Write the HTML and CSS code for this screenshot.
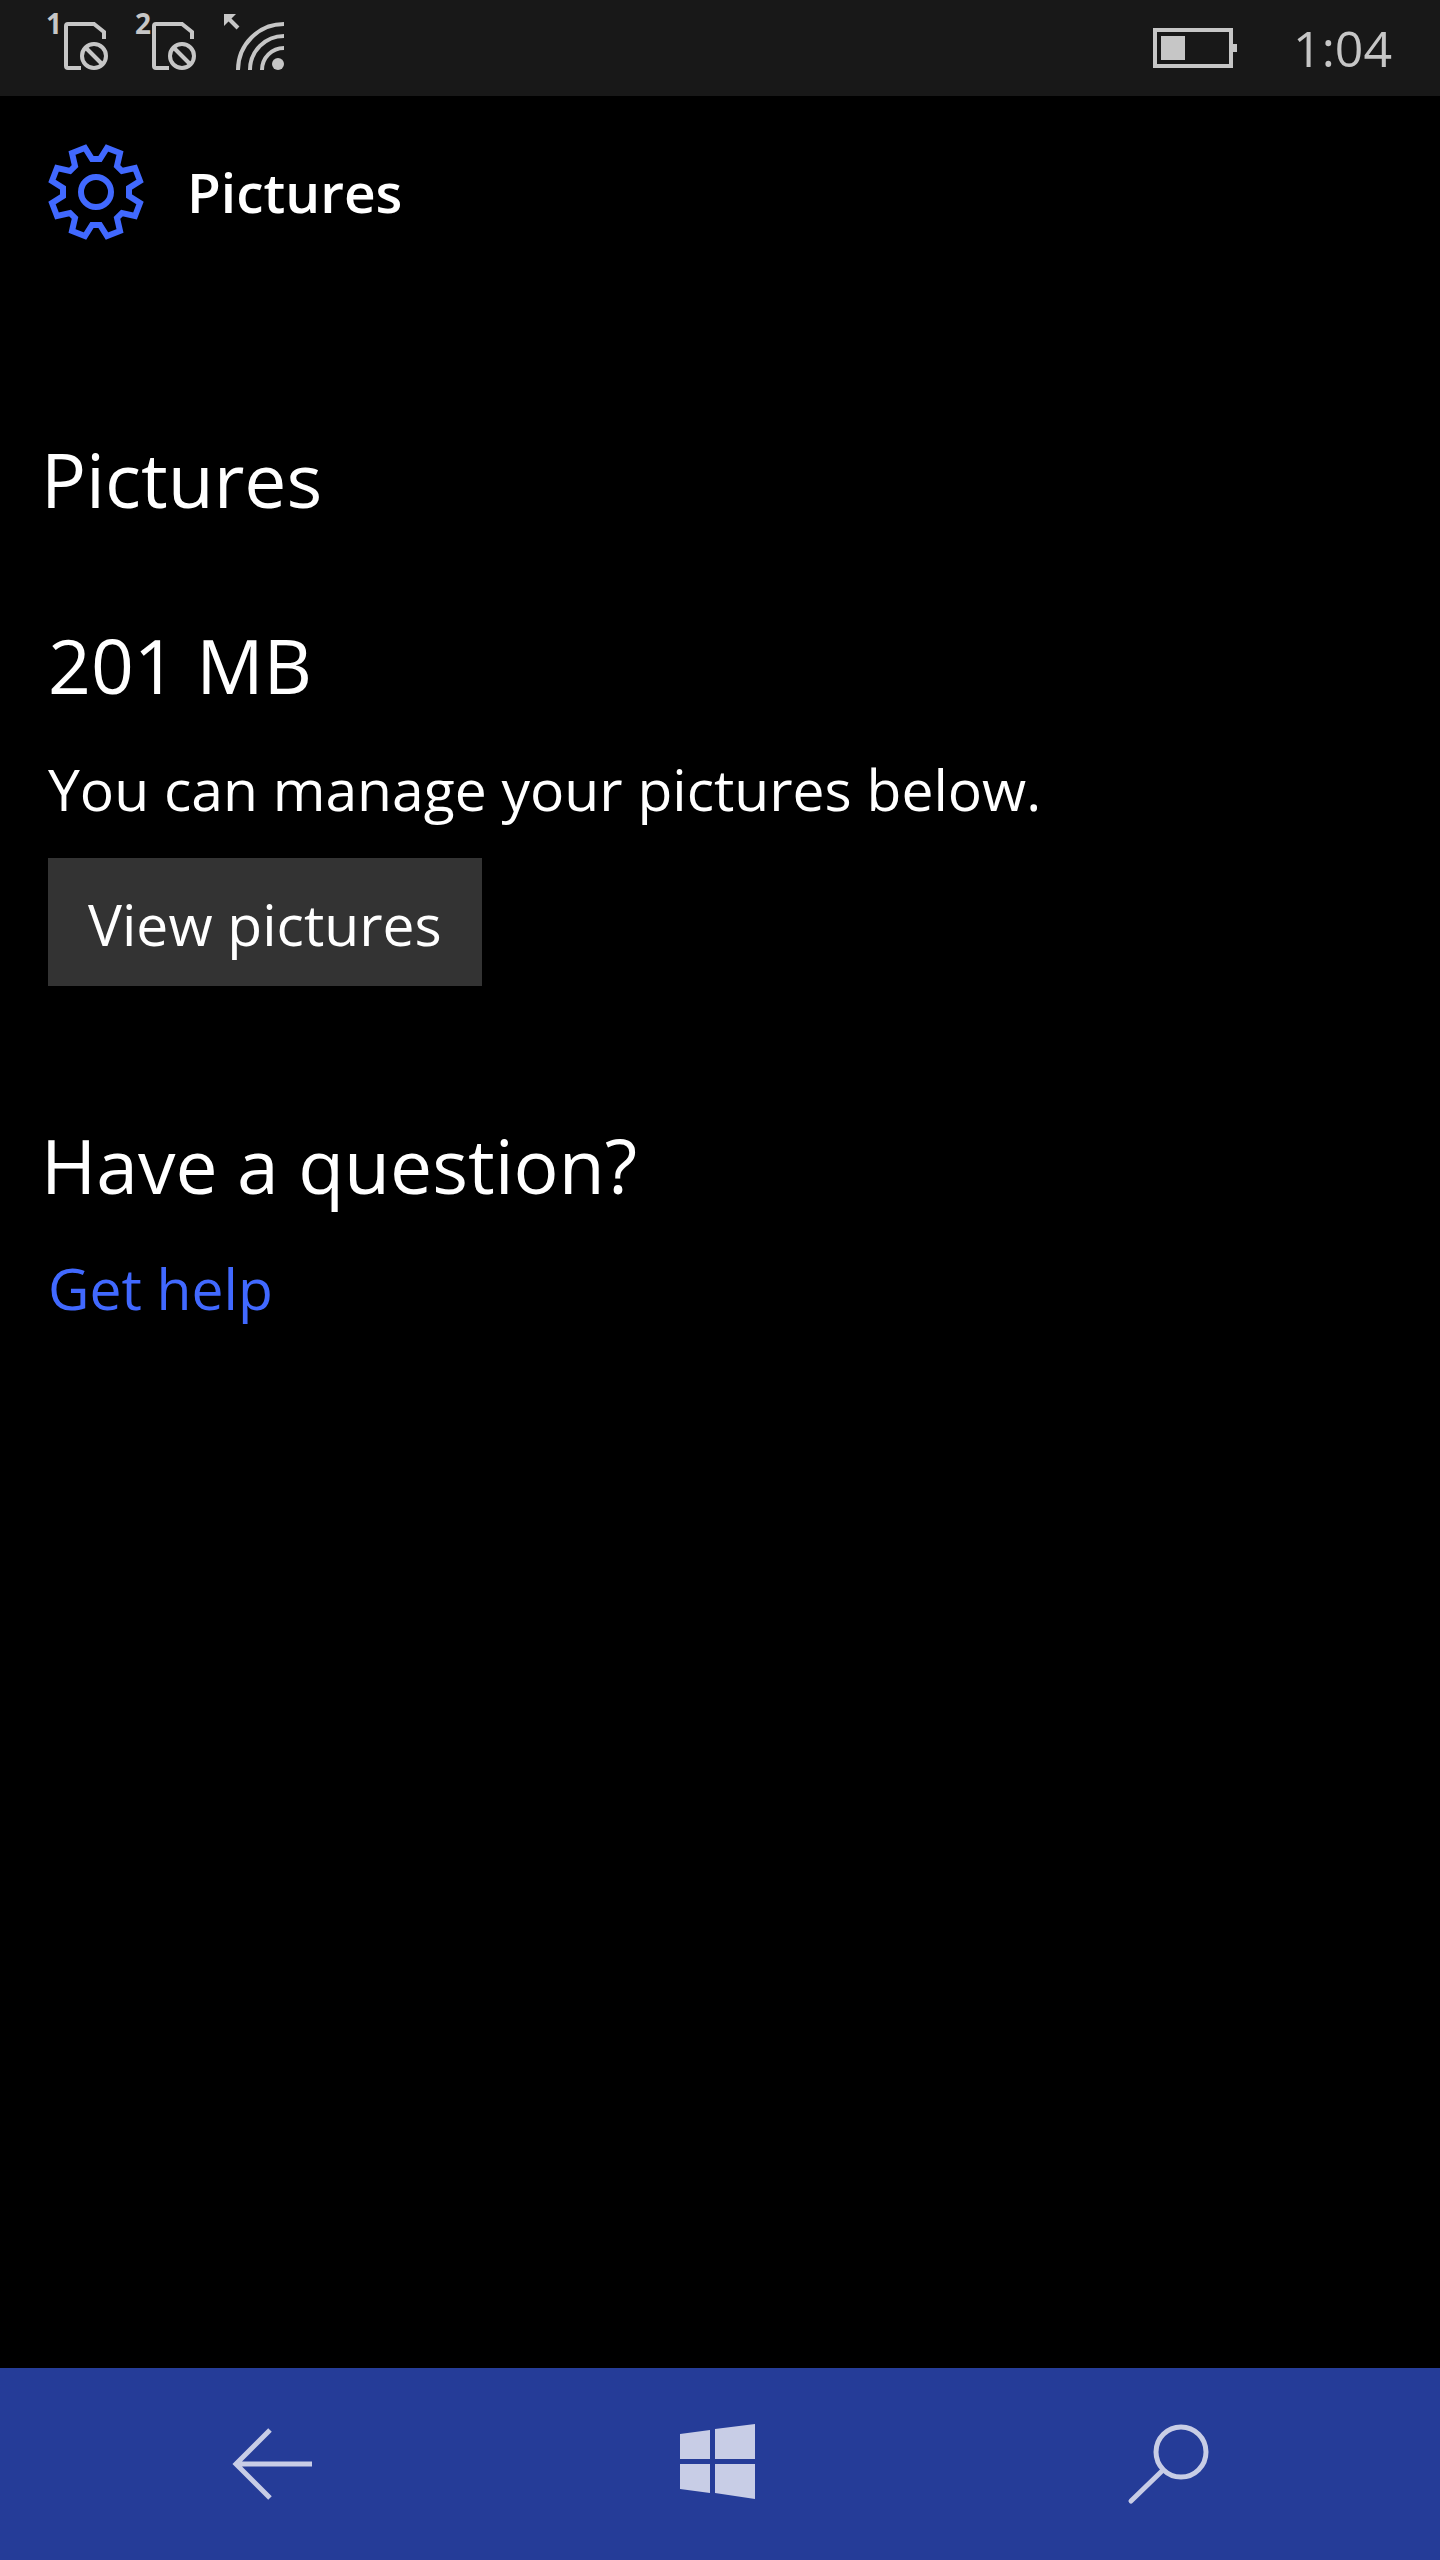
FILE: index.html
```html
<!DOCTYPE html>
<html lang="en">
<head>
  <meta charset="utf-8">
  <meta name="viewport" content="width=device-width, initial-scale=1">
  <title>Pictures</title>
  <link rel="stylesheet" href="styles.css">
</head>
<body>
  <div class="phone">
    <div class="status-bar">
      <div class="status-icons">
        <svg class="status-icon" viewBox="0 0 64 64" role="img" aria-label="SIM 1 unavailable">
          <text class="sim-number" x="-2" y="22">1</text>
          <path class="line" d="M56 27V20L46 12H20Q18 12 18 14V54Q18 56 20 56H33"/>
          <circle class="line" cx="46" cy="44" r="12"/>
          <path class="line" d="M38 36L54 52"/>
        </svg>
        <svg class="status-icon" viewBox="0 0 64 64" role="img" aria-label="SIM 2 unavailable">
          <text class="sim-number" x="-1" y="22">2</text>
          <path class="line" d="M56 27V20L46 12H20Q18 12 18 14V54Q18 56 20 56H33"/>
          <circle class="line" cx="46" cy="44" r="12"/>
          <path class="line" d="M38 36L54 52"/>
        </svg>
        <svg class="status-icon" viewBox="0 0 64 64" role="img" aria-label="Wi-Fi">
          <path class="solid" d="M0 2H12L8 6L4 10L0 14Z"/>
          <path class="line" d="M4 6L14 16"/>
          <path class="line" d="M14 58A46 46 0 0 1 60 12M26 58A34 34 0 0 1 60 24M38 58A22 22 0 0 1 60 36"/>
          <circle class="solid" cx="54" cy="52" r="6"/>
        </svg>
      </div>
      <div class="status-info">
        <svg class="battery" viewBox="0 0 84 40" role="img" aria-label="Battery">
          <rect class="line" x="2" y="2" width="76" height="36"/>
          <path class="solid" d="M8 8h24v24H8zM80 16h4v8h-4z"/>
        </svg>
        <time class="clock">1:04</time>
      </div>
    </div>

    <header class="app-header">
      <svg class="gear" viewBox="-48 -48 96 96" aria-hidden="true">
        <path d="M-4-33H4L11-44L24-39L21-26L26-21L39-24L44-11L33-4V4L44 11L39 24L26 21L21 26L24 39L11 44L4 33H-4L-11 44L-24 39L-21 26L-26 21L-39 24L-44 11L-33 4V-4L-44-11L-39-24L-26-21L-21-26L-24-39L-11-44Z"/>
        <circle r="15"/>
      </svg>
      <h1 class="app-title">Pictures</h1>
    </header>

    <main class="content">
      <section class="section">
        <h2 class="heading">Pictures</h2>
        <p class="size">201 MB</p>
        <p class="text">You can manage your pictures below.</p>
        <button class="button" type="button">View pictures</button>
      </section>
      <section class="section">
        <h2 class="heading">Have a question?</h2>
        <a class="link" href="#help">Get help</a>
      </section>
    </main>

    <nav class="nav-bar" aria-label="System">
      <button class="nav-button" type="button" aria-label="Back">
        <svg viewBox="0 0 80 80"><path class="nav-line" d="M38 6L4 40L38 74M4 40H80"/></svg>
      </button>
      <button class="nav-button" type="button" aria-label="Start">
        <svg viewBox="0 0 80 80"><path class="nav-solid" d="M0 10L30 6V35H0ZM35 5L75 0V35H35ZM0 40H30V69L0 65ZM35 40H75V75L35 69Z"/></svg>
      </button>
      <button class="nav-button" type="button" aria-label="Search">
        <svg viewBox="0 0 80 80"><circle class="nav-line" cx="53" cy="28" r="25"/><path class="nav-line nav-handle" d="M35 46L3 77"/></svg>
      </button>
    </nav>
  </div>
</body>
</html>
```

FILE: styles.css
```css
* {
  box-sizing: border-box;
}

body {
  margin: 0;
  background: #000;
  color: #fff;
  font-family: "Open Sans", "Noto Sans", sans-serif;
  font-size: 57px;
  line-height: 80px;
}

h1,
h2,
p {
  margin: 0;
  font-weight: 400;
}

.phone {
  display: flex;
  flex-direction: column;
  min-height: 100vh;
}

.status-bar {
  display: flex;
  align-items: center;
  justify-content: space-between;
  height: 96px;
  padding: 0 48px;
  background: #181818;
  color: #c6c6c6;
}

.status-icons {
  display: flex;
  gap: 24px;
  padding-bottom: 8px;
}

.status-icon {
  width: 64px;
  height: 64px;
  overflow: visible;
}

.status-info {
  display: flex;
  align-items: center;
  gap: 56px;
}

.battery {
  width: 84px;
  height: 40px;
}

.clock {
  font-size: 50px;
  font-weight: 400;
  line-height: 64px;
}

.line {
  fill: none;
  stroke: #c6c6c6;
  stroke-width: 4px;
}

.solid {
  fill: #c6c6c6;
}

.sim-number {
  fill: #c6c6c6;
  font-size: 28px;
  font-weight: 700;
}

.app-header {
  display: flex;
  align-items: center;
  gap: 43px;
  height: 192px;
  padding: 0 48px;
}

.gear {
  width: 96px;
  height: 96px;
  fill: none;
  stroke: #4169ff;
  stroke-width: 6px;
}

.app-title {
  font-size: 55px;
  font-weight: 600;
}

.content {
  display: flex;
  flex: 1;
  flex-direction: column;
  gap: 126px;
  padding: 138px 48px 48px;
}

.section {
  display: flex;
  flex-direction: column;
  align-items: flex-start;
}

.heading,
.size {
  font-size: 75px;
  line-height: 106px;
}

.heading {
  margin-left: -7px;
}

.size {
  margin: 80px 0 31px;
}

.button {
  margin-top: 29px;
  padding: 26px 40px 22px;
  border: 0;
  background: #333;
  color: inherit;
  font: inherit;
}

.link {
  margin-top: 30px;
  color: #4169ff;
  text-decoration: none;
}

.nav-bar {
  display: flex;
  align-items: center;
  justify-content: space-between;
  height: 192px;
  padding: 0 232px;
  background: #253c98;
}

.nav-button {
  width: 80px;
  height: 80px;
  padding: 0;
  border: 0;
  background: none;
}

.nav-button svg {
  display: block;
  overflow: visible;
}

.nav-line {
  fill: none;
  stroke: #c8cde6;
  stroke-width: 5px;
}

.nav-handle {
  stroke-linecap: round;
}

.nav-solid {
  fill: #c8cde6;
}
```
